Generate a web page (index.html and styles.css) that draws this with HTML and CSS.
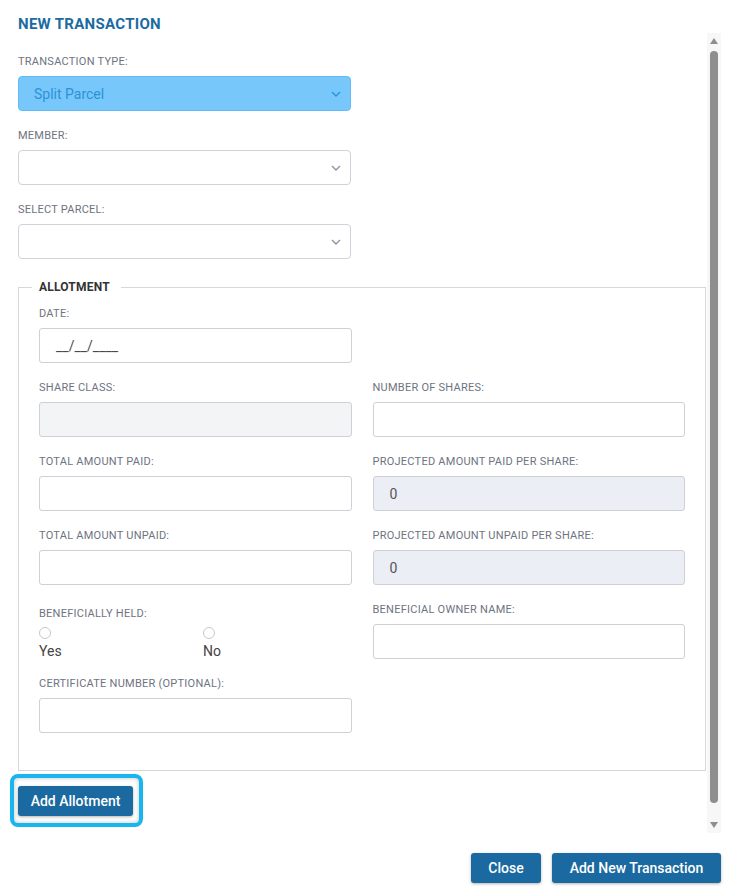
FILE: index.html
```html
<!DOCTYPE html>
<html>
<head>
    <link rel="stylesheet" href="styles.css">
</head>
<body>
    <div class="modal">
        <h2 class="modal-title">New Transaction</h2>

        <div class="modal-body">
            <form class="form">
                <div class="field">
                    <label>Transaction type:</label>
                    <div class="select select-active">
                        <span>Split Parcel</span>
                        <svg class="chevron" width="10" height="6" viewBox="0 0 10 6"><path d="M1 1l4 4 4-4" fill="none" stroke="currentColor" stroke-width="1.4"/></svg>
                    </div>
                </div>

                <div class="field">
                    <label>Member:</label>
                    <div class="select">
                        <span></span>
                        <svg class="chevron" width="10" height="6" viewBox="0 0 10 6"><path d="M1 1l4 4 4-4" fill="none" stroke="currentColor" stroke-width="1.4"/></svg>
                    </div>
                </div>

                <div class="field">
                    <label>Select parcel:</label>
                    <div class="select">
                        <span></span>
                        <svg class="chevron" width="10" height="6" viewBox="0 0 10 6"><path d="M1 1l4 4 4-4" fill="none" stroke="currentColor" stroke-width="1.4"/></svg>
                    </div>
                </div>

                <fieldset class="allotment">
                    <legend>Allotment</legend>

                    <div class="grid">
                        <div class="field">
                            <label>Date:</label>
                            <div class="input">__/__/____</div>
                        </div>
                        <div></div>

                        <div class="field">
                            <label>Share class:</label>
                            <div class="input input-disabled"></div>
                        </div>
                        <div class="field">
                            <label>Number of shares:</label>
                            <div class="input"></div>
                        </div>

                        <div class="field">
                            <label>Total amount paid:</label>
                            <div class="input"></div>
                        </div>
                        <div class="field">
                            <label>Projected amount paid per share:</label>
                            <div class="input input-readonly">0</div>
                        </div>

                        <div class="field">
                            <label>Total amount unpaid:</label>
                            <div class="input"></div>
                        </div>
                        <div class="field">
                            <label>Projected amount unpaid per share:</label>
                            <div class="input input-readonly">0</div>
                        </div>

                        <div class="field radios-field">
                            <label>Beneficially held:</label>
                            <div class="radios">
                                <div class="radio"><span class="dot"></span><span>Yes</span></div>
                                <div class="radio"><span class="dot"></span><span>No</span></div>
                            </div>
                        </div>
                        <div class="field">
                            <label>Beneficial owner name:</label>
                            <div class="input"></div>
                        </div>

                        <div class="field">
                            <label>Certificate number (optional):</label>
                            <div class="input"></div>
                        </div>
                    </div>
                </fieldset>

                <div class="highlight">
                    <button type="button" class="btn btn-allotment">Add Allotment</button>
                </div>
            </form>

            <div class="scrollbar">
                <span class="arrow arrow-up"></span>
                <div class="thumb"></div>
                <span class="arrow arrow-down"></span>
            </div>
        </div>

        <div class="modal-footer">
            <button type="button" class="btn btn-close">Close</button>
            <button type="button" class="btn btn-add">Add New Transaction</button>
        </div>
    </div>
</body>
</html>
```

FILE: styles.css
```css
body {
    margin: 0;
    background: #fff;
    font-family: Roboto, "Liberation Sans", sans-serif;
}

.modal {
    width: 741px;
    height: 896px;
    overflow: hidden;
}

.modal-title {
    margin: 0;
    padding: 15px 18px 0;
    height: 18px;
    line-height: 18px;
    font-size: 15px;
    font-weight: 700;
    letter-spacing: 0.3px;
    color: #1b6ba1;
    text-transform: uppercase;
}

.modal-body {
    display: flex;
    height: 800px;
}

.form {
    width: 688px;
    padding: 22px 0 0 18px;
}

.field {
    display: flex;
    flex-direction: column;
    margin-bottom: 18px;
}

.field label {
    font-size: 11px;
    line-height: 14px;
    color: #6e7381;
    text-transform: uppercase;
    letter-spacing: 0.25px;
    margin-bottom: 7px;
}

.select {
    width: 333px;
    height: 35px;
    box-sizing: border-box;
    border: 1px solid #d1d2d8;
    border-radius: 4px;
    display: flex;
    align-items: center;
    justify-content: space-between;
    padding: 0 9px 0 15px;
    color: #8f93a6;
    font-size: 14px;
}

.select-active {
    background: #78c7fb;
    border-color: #62bbf5;
    color: #2a93d6;
}

/* margin collapses with the field above, so this is the whole gap */
.allotment {
    margin: 21px 0 0;
    padding: 13px 20px 19px;
    border: 1px solid #d6d6dc;
    min-width: 0;
}

.allotment legend {
    margin-left: -7px;
    padding: 0 11px 0 7px;
    font-size: 12px;
    font-weight: 700;
    letter-spacing: 0.2px;
    color: #333;
    text-transform: uppercase;
}

.grid {
    display: grid;
    grid-template-columns: 1fr 1fr;
    column-gap: 21px;
}

.input {
    height: 35px;
    box-sizing: border-box;
    border: 1px solid #cfd0d6;
    border-radius: 3px;
    padding: 0 16px;
    display: flex;
    align-items: center;
    font-size: 14px;
    color: #4a4a4a;
}

.input-disabled {
    background: #f3f4f6;
}

.input-readonly {
    background: #eceef5;
    color: #555;
}

.radios-field {
    padding-top: 4px;
}

.radios-field label {
    margin-bottom: 6px;
}

.radios {
    display: grid;
    grid-template-columns: 164px 1fr;
}

.radio {
    display: flex;
    flex-direction: column;
    align-items: flex-start;
    font-size: 14px;
    color: #444;
    line-height: 16px;
}

.dot {
    width: 10px;
    height: 10px;
    border: 1px solid #c8c8c8;
    border-radius: 50%;
    margin-bottom: 4px;
}

.highlight {
    display: inline-block;
    margin: 3px 0 0 -8px;
    padding: 8px 6px 7px 4px;
    border: 4px solid #17b6ee;
    border-radius: 8px;
    box-shadow: inset 0 0 4px rgba(0, 0, 0, 0.25);
}

.btn {
    height: 30px;
    padding: 0;
    border: none;
    border-radius: 3px;
    background: #1a69a0;
    color: #fff;
    font-family: Roboto, "Liberation Sans", sans-serif;
    font-size: 14px;
    font-weight: 500;
    box-shadow: 0 1px 3px rgba(0, 0, 0, 0.3);
    cursor: pointer;
}

.btn-allotment {
    width: 115px;
}

.btn-close {
    width: 70px;
}

.btn-add {
    width: 169px;
}

.scrollbar {
    width: 14px;
    margin-left: 1px;
    background: #f7f7f7;
    display: flex;
    flex-direction: column;
    align-items: center;
    padding: 5px 0 5px;
    box-sizing: border-box;
}

.arrow {
    width: 0;
    height: 0;
    border-left: 4px solid transparent;
    border-right: 4px solid transparent;
}

.arrow-up {
    border-bottom: 6px solid #8e8e8e;
}

.arrow-down {
    border-top: 6px solid #8e8e8e;
}

.thumb {
    width: 8px;
    height: 752px;
    margin: 7px 0 19px;
    background: #8e8e8e;
    border-radius: 4px;
}

.modal-footer {
    display: flex;
    justify-content: flex-end;
    gap: 11px;
    padding: 20px 20px 0 0;
}
```
